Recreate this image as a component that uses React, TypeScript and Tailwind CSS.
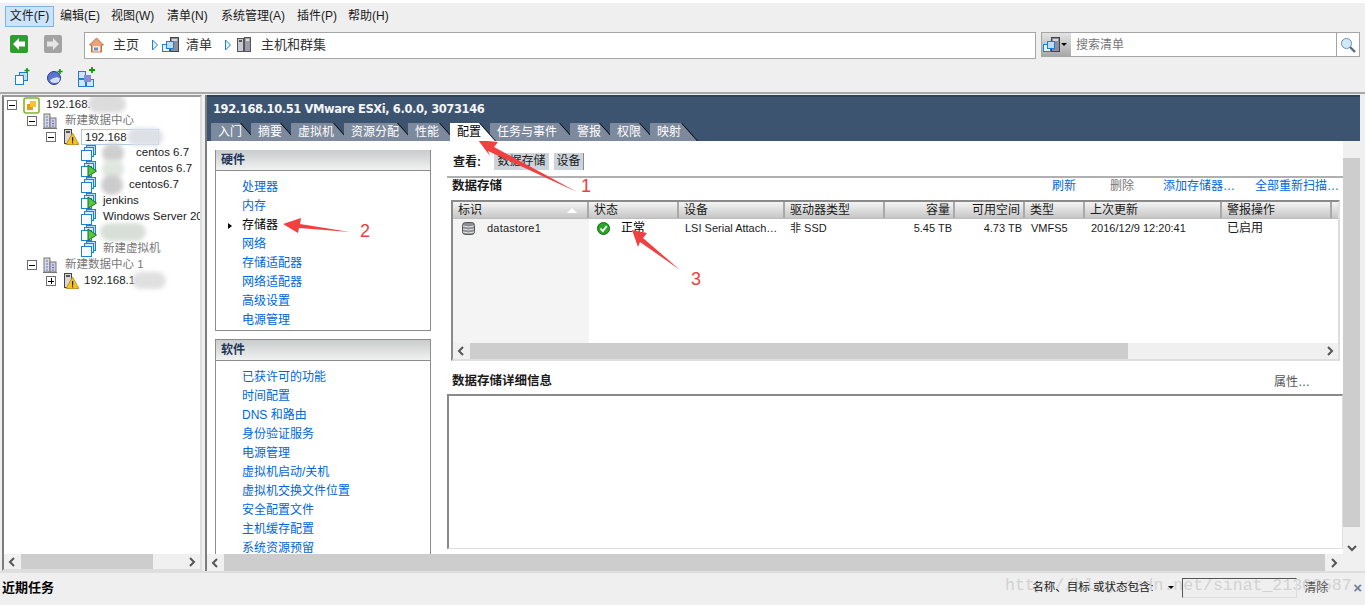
import { ReactNode } from 'react';

const hardware = ['处理器', '内存', '存储器', '网络', '存储适配器', '网络适配器', '高级设置', '电源管理'];
const software = ['已获许可的功能', '时间配置', 'DNS 和路由', '身份验证服务', '电源管理', '虚拟机启动/关机', '虚拟机交换文件位置', '安全配置文件', '主机缓存配置', '系统资源预留'];
const tabs = [
	{ label: '入门', w: 'w-[46px]' },
	{ label: '摘要', w: 'w-[46px]' },
	{ label: '虚拟机', w: 'w-[59px]' },
	{ label: '资源分配', w: 'w-[70px]' },
	{ label: '性能', w: 'w-[48px]' },
	{ label: '配置', w: 'w-[46px]', active: true },
	{ label: '任务与事件', w: 'w-[86px]' },
	{ label: '警报', w: 'w-[46px]' },
	{ label: '权限', w: 'w-[46px]' },
	{ label: '映射', w: 'w-[48px]' },
];
const columns = [
	{ label: '标识', w: 'w-[136px]' },
	{ label: '状态', w: 'w-[90px]' },
	{ label: '设备', w: 'w-[106px]' },
	{ label: '驱动器类型', w: 'w-[100px]' },
	{ label: '容量', w: 'w-[70px]', right: true },
	{ label: '可用空间', w: 'w-[70px]', right: true },
	{ label: '类型', w: 'w-[60px]' },
	{ label: '上次更新', w: 'w-[137px]' },
	{ label: '警报操作', w: 'w-[110px]' },
];

function VmIcon({ on }: { on?: boolean }) {
	return (
		<svg width="16" height="16" viewBox="0 0 16 16" className="shrink-0">
			<rect x="5.5" y="0.5" width="9" height="9" fill="#bcdcf8" stroke="#1f7fd6" />
			<rect x="3.5" y="2.5" width="9" height="9" fill="#d8ebfb" stroke="#1f7fd6" />
			<rect x="0.5" y="5.5" width="10" height="10" fill="#f4faff" stroke="#1f7fd6" />
			{on && <path d="M7 4 L15.5 10 L7 15.5 Z" fill="#58c83f" stroke="#16701c" />}
		</svg>
	);
}

function InventoryIcon() {
	return (
		<svg width="17" height="16" viewBox="0 0 17 16" className="shrink-0">
			<rect x="8.5" y="0.5" width="8" height="14" fill="#8d8da0" stroke="#444" />
			<rect x="10" y="2" width="5" height="2" fill="#d5d5dc" />
			<rect x="0.5" y="7.5" width="7" height="7" fill="#e6f2fd" stroke="#1f7fd6" />
			<rect x="4.5" y="4.5" width="7" height="7" fill="#bcdcf8" stroke="#1f7fd6" />
		</svg>
	);
}

function BlueArrow() {
	return (
		<svg width="6" height="12" viewBox="0 0 6 12" className="shrink-0 ml-[2px]">
			<path d="M0.5 1 L5.5 6 L0.5 11 Z" fill="#e6f2fd" stroke="#1f7fd6" />
		</svg>
	);
}

function Building() {
	return (
		<svg width="16" height="16" viewBox="0 0 16 16" className="shrink-0">
			<path d="M1 15.5 H15" stroke="#777" />
			<rect x="2" y="1" width="6" height="14" fill="#d8d8df" stroke="#777" />
			<rect x="8" y="5" width="6" height="10" fill="#c9c9e6" stroke="#777" />
			<path d="M4 4h2M4 7h2M4 10h2M4 13h2M10 8h2M10 10.5h2M10 13h2" stroke="#6a6ac8" />
		</svg>
	);
}

function HostWarn() {
	return (
		<svg width="15" height="16" viewBox="0 0 15 16" className="shrink-0">
			<rect x="0.5" y="0.5" width="7" height="14" fill="#d9d9d9" stroke="#444" />
			<rect x="2" y="2" width="4" height="2" fill="#555" />
			<path d="M8.5 4 L15 15.5 H2 Z" fill="#f7c21b" stroke="#a87a00" strokeWidth="0.7" />
			<rect x="8" y="8" width="1.2" height="4.5" fill="#222" />
			<rect x="8" y="13.2" width="1.2" height="1.2" fill="#222" />
		</svg>
	);
}

function Expander({ plus }: { plus?: boolean }) {
	return (
		<span className="w-[10px] h-[10px] border border-[#6f6f6f] bg-white flex items-center justify-center shrink-0 relative">
			<span className="w-[6px] h-px bg-black" />
			{plus && <span className="absolute w-px h-[6px] bg-black" />}
		</span>
	);
}

function Blur({ className }: { className: string }) {
	return <span className={'absolute rounded-full blur-[2px] ' + className} />;
}

function TreeRow({ pad, children }: { pad: string; children: ReactNode }) {
	return <div className={'h-[16px] flex items-center relative whitespace-nowrap ' + pad}>{children}</div>;
}

function Chevron({ dir }: { dir: 'left' | 'right' | 'down' }) {
	const d = dir === 'left' ? 'M6 1 L2 5 L6 9' : dir === 'right' ? 'M3 1 L7 5 L3 9' : 'M1 3 L5 7 L9 3';
	return (
		<svg width="10" height="10" viewBox="0 0 10 10">
			<path d={d} fill="none" stroke="#555" strokeWidth="2" />
		</svg>
	);
}

function LinkList({ items, current }: { items: string[]; current?: string }) {
	return (
		<ul className="pt-[7px] pl-[26px]">
			{items.map((item) => (
				<li key={item} className={'h-[19px] leading-[19px] relative whitespace-nowrap ' + (item === current ? 'text-black' : 'text-[#0066dd]')}>
					{item === current && <span className="absolute left-[-14px] top-[7px] border-y-[3px] border-l-[4px] border-y-transparent border-l-black" />}
					{item}
				</li>
			))}
		</ul>
	);
}

function PanelTitle({ children }: { children: ReactNode }) {
	return (
		<div className="h-[21px] pl-[5px] leading-[21px] font-bold text-[#1d3557] border-b border-[#8c8c8c] bg-gradient-to-b from-[#c9cccc] to-[#f1f2f2]">{children}</div>
	);
}

export default function App() {
	return (
		<div className="w-[1365px] h-[605px] relative overflow-hidden bg-[#efefef] flex flex-col text-[12px] text-[#1a1a1a] [font-family:'Liberation_Sans','Noto_Sans_CJK_SC',sans-serif]">
			<div className="h-[3px] bg-white shrink-0" />

			{/* menu */}
			<div className="h-[24px] shrink-0 flex items-center pl-[5px] pt-[2px]">
				<span className="w-[49px] h-[21px] leading-[19px] text-center bg-[#cce4f9] border border-[#7cb4e6]">文件(F)</span>
				<span className="ml-[6px] w-[51px]">编辑(E)</span>
				<span className="w-[56px]">视图(W)</span>
				<span className="w-[54px]">清单(N)</span>
				<span className="w-[76px]">系统管理(A)</span>
				<span className="w-[51px]">插件(P)</span>
				<span>帮助(H)</span>
			</div>

			{/* nav */}
			<div className="h-[33px] shrink-0 flex items-start pt-[5px] pl-[10px]">
				<svg width="18" height="18" viewBox="0 0 18 18" className="mt-[3px]">
					<rect width="18" height="18" rx="2" fill="#2f9e2f" />
					<path d="M9 3 L3 9 L9 15 V11.5 H15 V6.5 H9 Z" fill="#fff" />
				</svg>
				<svg width="18" height="18" viewBox="0 0 18 18" className="mt-[3px] ml-[16px]">
					<rect width="18" height="18" rx="2" fill="#a3a3a3" />
					<path d="M9 3 L15 9 L9 15 V11.5 H3 V6.5 H9 Z" fill="#e6e6e6" />
				</svg>
				<div className="ml-[22px] w-[952px] h-[27px] pb-[2px] bg-white border border-[#a5a5a5] flex items-center text-[13px] text-[#333]">
					<svg width="15" height="16" viewBox="0 0 15 16" className="ml-[4px]">
						<path d="M7.5 1 L14.5 8 H12.5 V15 H2.5 V8 H0.5 Z" fill="#e8a27c" stroke="#b5562f" strokeWidth="0.8" />
						<rect x="4" y="9" width="7" height="5.5" fill="#f3efd8" />
						<rect x="5" y="10.5" width="4" height="3" fill="#6d92c9" />
					</svg>
					<span className="ml-[9px] w-[37px]">主页</span>
					<BlueArrow />
					<span className="ml-[4px]"><InventoryIcon /></span>
					<span className="ml-[7px] w-[37px]">清单</span>
					<BlueArrow />
					<svg width="15" height="16" viewBox="0 0 15 16" className="ml-[6px]">
						<rect x="0.5" y="1.5" width="6" height="13" fill="#c9c9d1" stroke="#555" />
						<rect x="7.5" y="0.5" width="6" height="14" fill="#9c9cab" stroke="#555" />
						<rect x="2" y="3" width="3" height="2" fill="#555" />
						<rect x="9" y="2" width="3" height="2" fill="#e0e0e0" />
					</svg>
					<span className="ml-[9px]">主机和群集</span>
				</div>
				<div className="ml-[5px] w-[319px] h-[25px] bg-white border border-[#a5a5a5] flex items-center">
					<div className="w-[29px] h-full shrink-0 bg-gradient-to-b from-[#e4e4e4] to-[#a8a8a8] flex items-center gap-[1px] pl-[1px]">
						<InventoryIcon />
						<span className="border-x-[3px] border-t-[3px] border-x-transparent border-t-black" />
					</div>
					<span className="ml-[5px] text-[#777] flex-1">搜索清单</span>
					<div className="w-[23px] h-full border-l border-[#a5a5a5] flex items-center justify-center">
						<svg width="16" height="16" viewBox="0 0 16 16">
							<path d="M9.5 9.5 L15 15" stroke="#5a6a80" strokeWidth="2.4" />
							<circle cx="6.5" cy="6.5" r="5" fill="#cfeafc" stroke="#6f8fb0" />
						</svg>
					</div>
				</div>
			</div>

			{/* toolbar */}
			<div className="h-[34px] shrink-0 flex items-center pl-[14px] pt-px border-b-2 border-[#a9a9a9]">
				<svg width="16" height="18" viewBox="0 0 16 18">
					<rect x="5.5" y="4.5" width="8" height="8" fill="#bcdcf8" stroke="#1f7fd6" />
					<rect x="1.5" y="7.5" width="8" height="9" fill="#f4faff" stroke="#1f7fd6" />
					<path d="M13 0v5M10.5 2.5h5" stroke="#0a9a0a" strokeWidth="1.6" />
				</svg>
				<svg width="16" height="18" viewBox="0 0 16 18" className="ml-[17px]">
					<circle cx="7" cy="10" r="6.5" fill="#5b73d1" stroke="#2a3c8f" />
					<path d="M3 12 Q8 8 13 10 L12 14 Q7 16 4 14 Z" fill="#cfe0f7" />
					<path d="M13 1v5M10.5 3.5h5" stroke="#0a9a0a" strokeWidth="1.6" />
				</svg>
				<svg width="18" height="20" viewBox="0 0 18 20" className="ml-[15px]">
					<rect x="0.5" y="4.5" width="7" height="7" fill="#cfe6fb" stroke="#1f7fd6" />
					<rect x="0.5" y="12.5" width="7" height="7" fill="#cfe6fb" stroke="#1f7fd6" />
					<rect x="8.5" y="12.5" width="7" height="7" fill="#cfe6fb" stroke="#1f7fd6" />
					<rect x="6" y="8" width="7" height="7" fill="#8b8bdc" />
					<path d="M14 0v6M11 3h6" stroke="#0a9a0a" strokeWidth="1.8" />
				</svg>
			</div>

			{/* panels */}
			<div className="h-[477px] shrink-0 flex pt-[1px] pl-[2px]">
				{/* tree */}
				<div className="w-[200px] h-full border-2 border-[#dedede] border-l-[#7d7d7d] border-t-[#9a9a9a] bg-white flex flex-col">
					<div className="h-[457px] overflow-hidden text-[11.5px]">
						<TreeRow pad="pl-[3px]">
							<Expander />
							<svg width="17" height="17" viewBox="0 0 17 17" className="ml-[6px] shrink-0">
								<rect x="1" y="1" width="15" height="15" rx="2" fill="#fff" stroke="#7fb52d" strokeWidth="1.6" />
								<rect x="4" y="7" width="6" height="6" fill="#e89a1c" />
								<rect x="7" y="4" width="6" height="6" fill="#f2c33c" />
							</svg>
							<span className="ml-[6px]">192.168.</span>
							<Blur className="left-[84px] top-[-2px] w-[38px] h-[18px] bg-[#dcdcdc]" />
						</TreeRow>
						<TreeRow pad="pl-[23px]">
							<Expander />
							<span className="ml-[5px]"><Building /></span>
							<span className="ml-[7px] text-[#777]">新建数据中心</span>
						</TreeRow>
						<TreeRow pad="pl-[42px]">
							<Expander />
							<span className="ml-[8px]"><HostWarn /></span>
							<span className="ml-[2px] w-[78px] h-[16px] leading-[14px] border border-[#a8cbe8] pl-[3px]">192.168</span>
							<Blur className="left-[123px] top-[-1px] w-[36px] h-[18px] bg-[#dde1e6]" />
						</TreeRow>
						<TreeRow pad="pl-[77px]">
							<VmIcon />
							<span className="ml-[39px]">centos 6.7</span>
							<Blur className="left-[98px] top-[-2px] w-[22px] h-[20px] bg-[#cfcfcf]" />
						</TreeRow>
						<TreeRow pad="pl-[77px]">
							<VmIcon on />
							<span className="ml-[42px]">centos 6.7</span>
							<Blur className="left-[98px] top-[-2px] w-[22px] h-[20px] bg-[#dfe5df]" />
						</TreeRow>
						<TreeRow pad="pl-[77px]">
							<VmIcon />
							<span className="ml-[32px]">centos6.7</span>
							<Blur className="left-[97px] top-[-2px] w-[22px] h-[20px] bg-[#cccccc]" />
						</TreeRow>
						<TreeRow pad="pl-[77px]">
							<VmIcon on />
							<span className="ml-[6px]">jenkins</span>
						</TreeRow>
						<TreeRow pad="pl-[77px]">
							<VmIcon />
							<span className="ml-[6px]">Windows Server 20</span>
						</TreeRow>
						<TreeRow pad="pl-[77px]">
							<VmIcon on />
							<Blur className="left-[96px] top-[-2px] w-[46px] h-[18px] bg-[#d8dfd8]" />
						</TreeRow>
						<TreeRow pad="pl-[77px]">
							<VmIcon />
							<span className="ml-[6px] text-[#777]">新建虚拟机</span>
						</TreeRow>
						<TreeRow pad="pl-[23px]">
							<Expander />
							<span className="ml-[5px]"><Building /></span>
							<span className="ml-[7px] text-[#777]">新建数据中心 1</span>
						</TreeRow>
						<TreeRow pad="pl-[42px]">
							<Expander plus />
							<span className="ml-[8px]"><HostWarn /></span>
							<span className="ml-[5px]">192.168.1</span>
							<Blur className="left-[128px] top-[-1px] w-[34px] h-[17px] bg-[#e0e0e0]" />
						</TreeRow>
					</div>
					<div className="h-[15px] flex items-center bg-[#f0f0f0]">
						<span className="w-[17px] flex justify-center"><Chevron dir="left" /></span>
						<span className="w-[132px] h-full bg-[#cdcdcd]" />
						<span className="flex-1" />
						<span className="w-[17px] flex justify-center"><Chevron dir="right" /></span>
					</div>
				</div>

				{/* details */}
				<div className="ml-[3px] w-[1155px] h-full border-l-2 border-[#7d7d7d] flex flex-col">
					<div className="h-[46px] shrink-0 bg-[#3d5470] relative">
						<div className="pl-[6px] pt-[5px] text-[11.5px] font-bold text-[#f3f5f7] leading-[14px] border-t-2 border-[#2f4058] whitespace-nowrap [font-family:'DejaVu_Sans','Noto_Sans_CJK_SC',sans-serif] tracking-[-0.4px]">192.168.10.51 VMware ESXi, 6.0.0, 3073146</div>
						<div className="absolute left-[4px] bottom-0 flex items-end">
							{tabs.map((tab) => (
								<div key={tab.label} className={'h-[18px] mr-[-6px] pr-[1px] bg-black [clip-path:polygon(0_0,calc(100%-16px)_0,100%_100%,0_100%)] ' + tab.w + (tab.active ? ' relative z-10' : '')}>
									<div className={'h-full pl-[7px] leading-[19px] whitespace-nowrap text-[12px] [clip-path:polygon(0_0,calc(100%-16px)_0,100%_100%,0_100%)] ' + (tab.active ? 'bg-white text-black' : 'bg-[#7d899c] text-white')}>{tab.label}</div>
								</div>
							))}
						</div>
					</div>
					<div className="flex-1 min-h-0 flex bg-white">
						<div className="flex-1 min-w-0 flex flex-col">
							<div className="flex-1 min-h-0 flex overflow-hidden">
								<div className="w-[216px] ml-[8px] mt-[9px] shrink-0 flex flex-col">
									<div className="h-[181px] border border-[#8c8c8c] border-t-0">
										<PanelTitle>硬件</PanelTitle>
										<LinkList items={hardware} current="存储器" />
									</div>
									<div className="mt-[8px] flex-1 border border-b-0 border-[#8c8c8c]">
										<PanelTitle>软件</PanelTitle>
										<LinkList items={software} />
									</div>
								</div>
								<div className="ml-[16px] w-[896px] shrink-0 flex flex-col">
									<div className="h-[37px] shrink-0 flex items-center pt-[6px] pl-[6px] border-b-2 border-[#b0b0b0]">
										<span className="font-bold w-[41px]">查看:</span>
										<span className="w-[55px] h-[17px] leading-[17px] text-center bg-[#ccd3db]">数据存储</span>
										<span className="ml-[5px] w-[30px] h-[17px] leading-[17px] text-center bg-[#ccd3db] border-r border-[#8c8c8c]">设备</span>
									</div>
									<div className="h-[22px] shrink-0 flex items-center relative pl-[5px] pb-[6px]">
										<span className="font-bold text-[12.5px]">数据存储</span>
										<span className="ml-auto flex items-center text-[#0066dd] pr-[4px] whitespace-nowrap">
											<span className="w-[58px]">刷新</span>
											<span className="w-[53px] text-[#777]">删除</span>
											<span className="w-[92px]">添加存储器…</span>
											<span>全部重新扫描…</span>
										</span>
									</div>
									<div className="h-[161px] shrink-0 ml-[4px] mr-[3px] border-2 border-[#8a8a8a] border-r-[#dedede] border-b-[#dedede] flex flex-col">
										<div className="h-[17px] shrink-0 flex bg-gradient-to-b from-[#f4f4f4] to-[#c6c6c6] border-b border-[#bdbdbd]">
											{columns.map((c) => (
												<span key={c.label} className={'shrink-0 pl-[5px] pr-[3px] leading-[16px] border-r-2 border-[#a9a9a9] relative ' + c.w + (c.right ? ' text-right' : '')}>
													{c.label}
													{c.label === '标识' && <span className="absolute right-[10px] top-[6px] border-x-[5px] border-b-[5px] border-x-transparent border-b-white" />}
												</span>
											))}
										</div>
										<div className="flex-1 min-h-0 flex">
											<div className="w-[136px] shrink-0 bg-[#f4f4f4] flex items-start pt-[1px] pl-[9px] h-full">
												<svg width="13" height="15" viewBox="0 0 13 15" className="mt-[1px]">
													<rect x="0.5" y="1.5" width="12" height="12" rx="3" fill="#8c9094" stroke="#555" />
													<path d="M1 5q5.5 2 11 0M1 8q5.5 2 11 0M1 11q5.5 2 11 0" fill="none" stroke="#e6e6e6" />
												</svg>
												<span className="ml-[12px] leading-[16px] text-[11px] tracking-[0.2px]">datastore1</span>
											</div>
											<div className="flex-1 flex items-start pt-[1px] leading-[16px] text-[11px] whitespace-nowrap">
												<span className="w-[90px] flex items-center pl-[8px]">
													<svg width="13" height="13" viewBox="0 0 13 13">
														<circle cx="6.5" cy="6.5" r="6" fill="#2aa52a" stroke="#0f6f0f" />
														<path d="M3.5 6.5 L5.8 9 L9.8 4" fill="none" stroke="#fff" strokeWidth="1.8" />
													</svg>
													<span className="ml-[11px] text-[12px] text-black">正常</span>
												</span>
												<span className="w-[106px] pl-[6px]">LSI Serial Attach…</span>
												<span className="w-[100px] pl-[5px]">非 SSD</span>
												<span className="w-[70px] pr-[3px] text-right">5.45 TB</span>
												<span className="w-[70px] pr-[3px] text-right">4.73 TB</span>
												<span className="w-[60px] pl-[6px]">VMFS5</span>
												<span className="w-[137px] pl-[6px]">2016/12/9 12:20:41</span>
												<span className="pl-[5px] text-[12px]">已启用</span>
											</div>
										</div>
										<div className="h-[16px] shrink-0 flex items-center bg-[#f0f0f0]">
											<span className="w-[17px] flex justify-center"><Chevron dir="left" /></span>
											<span className="w-[658px] h-full bg-[#cdcdcd]" />
											<span className="flex-1" />
											<span className="w-[17px] flex justify-center"><Chevron dir="right" /></span>
										</div>
									</div>
									<div className="h-[33px] shrink-0 flex items-center pl-[5px] pt-[8px]">
										<span className="font-bold text-[12.5px]">数据存储详细信息</span>
										<span className="ml-auto mr-[33px] text-[#555]">属性…</span>
									</div>
									<div className="flex-1 min-h-0 mb-[5px] border-t-2 border-l-2 border-[#8a8a8a] border-r border-r-[#dedede] border-b border-b-[#dedede]" />
								</div>
							</div>
							<div className="h-[17px] shrink-0 flex items-center bg-[#f0f0f0]">
								<span className="w-[17px] flex justify-center"><Chevron dir="left" /></span>
								<span className="w-[1101px] h-full bg-[#cdcdcd]" />
								<span className="flex-1 flex justify-center"><Chevron dir="right" /></span>
							</div>
						</div>
						<div className="w-[17px] shrink-0 bg-[#f0f0f0] flex flex-col">
							<span className="h-[17px]" />
							<span className="h-[369px] bg-[#cdcdcd]" />
							<span className="mt-auto h-[30px] flex justify-center pt-[2px]"><Chevron dir="down" /></span>
						</div>
					</div>
				</div>
			</div>

			{/* recent tasks */}
			<div className="flex-1 relative flex items-center pl-[2px] pb-[3px] border-t-2 border-[#dedede]">
				<span className="absolute left-[1005px] top-[1px] text-[16.5px] leading-[24px] text-[#d2d2d2] whitespace-nowrap [font-family:'Liberation_Mono',monospace]">http://blog.csdn.net/sinat_21302587</span>
				<span className="font-bold text-[13px] text-black [font-family:'Liberation_Serif','Noto_Sans_CJK_SC',serif]">近期任务</span>
				<div className="ml-auto flex items-center pr-[3px] relative">
					<span className="w-[131px] whitespace-nowrap text-[11.5px]">名称、目标 或状态包含:</span>
					<span className="ml-[5px] border-x-[3px] border-t-[3px] border-x-transparent border-t-black" />
					<span className="ml-[8px] w-[115px] h-[20px] border border-[#dedede] border-l-[#555] border-t-[#555]" />
					<span className="ml-[7px] w-[49px] text-[#555]">清除</span>
					<span className="text-[15px] leading-none font-bold text-[#6f7f99]">×</span>
				</div>
			</div>

			{/* annotations drawn on the screenshot */}
			<svg width="1365" height="605" className="absolute left-0 top-0 pointer-events-none">
				<path d="M478 140 L498 142 L494 147 L577 192 L488 151 L490 156 Z" fill="#f04040" />
				<path d="M283 224 L301 218 L300 224 L350 232 L299 228 L298 233 Z" fill="#f04040" />
				<path d="M632 230 L647 233 L643 238 L680 270 L640 242 L638 247 Z" fill="#f04040" />
				<text x="581" y="192" fontSize="18" fill="#f23c3c">1</text>
				<text x="360" y="237" fontSize="18" fill="#f23c3c">2</text>
				<text x="691" y="285" fontSize="18" fill="#f23c3c">3</text>
			</svg>
		</div>
	);
}
